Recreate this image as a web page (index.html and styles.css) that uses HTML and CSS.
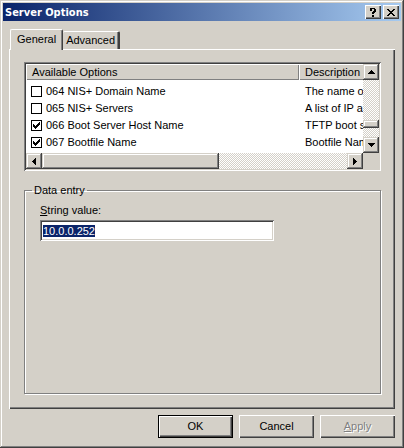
FILE: index.html
```html
<!DOCTYPE html>
<html lang="en">
<head>
<meta charset="utf-8">
<title>Server Options</title>
<link rel="stylesheet" href="styles.css">
</head>
<body>
<main class="window">
  <header class="titlebar">
    <h1>Server Options</h1>
    <button class="caption" aria-label="Help"><svg width="8" height="9" viewBox="0 0 8 9"><path d="M1 0h5v1h1v3H6v1H5v1H3V4h1V3h1V1H3v2H1V1H0h1zM3 7h2v2H3z"/></svg></button>
    <button class="caption close" aria-label="Close"><svg width="8" height="7" viewBox="0 0 8 7"><path d="M0 0h2v1h1v1h2V1h1V0h2v1H7v1H6v1H5v1h1v1h1v1h1v1H6V6H5V5H3v1H2v1H0V6h1V5h1V4h1V3H2V2H1V1H0z"/></svg></button>
  </header>
  <div class="tabs" role="tablist">
    <button class="tab active" role="tab" aria-selected="true">General</button>
    <button class="tab" role="tab" aria-selected="false">Advanced</button>
  </div>
  <section class="pane" role="tabpanel">
    <div class="list">
      <div class="view">
        <table>
          <thead><tr><th class="name">Available Options</th><th>Description</th></tr></thead>
          <tbody>
            <tr><td><label><input type="checkbox">064 NIS+ Domain Name</label></td><td>The name of the domain</td></tr>
            <tr><td><label><input type="checkbox">065 NIS+ Servers</label></td><td>A list of IP addresses</td></tr>
            <tr><td><label><input type="checkbox" checked>066 Boot Server Host Name</label></td><td>TFTP boot server</td></tr>
            <tr><td><label><input type="checkbox" checked>067 Bootfile Name</label></td><td>Bootfile Name</td></tr>
          </tbody>
        </table>
      </div>
      <div class="scroll vertical">
        <button class="arrow" aria-label="Scroll up"><svg width="7" height="4" viewBox="0 0 7 4"><path d="M3 0h1v1h1v1h1v1h1v1H0V3h1V2h1V1h1z"/></svg></button>
        <div class="track"><div class="thumb"></div></div>
        <button class="arrow" aria-label="Scroll down"><svg width="7" height="4" viewBox="0 0 7 4"><path d="M0 0h7v1H6v1H5v1H4v1H3V3H2V2H1V1H0z"/></svg></button>
      </div>
      <div class="scroll horizontal">
        <button class="arrow" aria-label="Scroll left"><svg width="4" height="7" viewBox="0 0 4 7"><path d="M3 0h1v7H3V6H2V5H1V4H0V3h1V2h1V1h1z"/></svg></button>
        <div class="track"><div class="thumb"></div></div>
        <button class="arrow" aria-label="Scroll right"><svg width="4" height="7" viewBox="0 0 4 7"><path d="M0 0h1v1h1v1h1v1h1v1H3v1H2v1H1v1H0z"/></svg></button>
      </div>
    </div>
    <fieldset>
      <legend>Data entry</legend>
      <label for="value"><u>S</u>tring value:</label>
      <input id="value" class="text" type="text" value="10.0.0.252">
    </fieldset>
  </section>
  <footer>
    <button class="push default">OK</button>
    <button class="push">Cancel</button>
    <button class="push" disabled><u>A</u>pply</button>
  </footer>
</main>
<script src="main.js"></script>
</body>
</html>
```
FILE: styles.css
```css
:root {
  --face: #d4d0c8;
  --shadow: #808080;
  --dark: #404040;
  --raised: inset 1px 1px #fff, inset -1px -1px var(--dark), inset -2px -2px var(--shadow);
}

* { box-sizing: border-box; }

body {
  margin: 0;
  background: var(--face);
  color: #000;
  font: 11px/13px "Liberation Sans", Arial, sans-serif;
}

button, input { font: inherit; color: inherit; }

button {
  border: 0;
  border-radius: 0;
  padding: 0;
  background: var(--face);
}

svg { display: block; shape-rendering: crispEdges; }

.window {
  display: flex;
  flex-direction: column;
  min-height: 100vh;
  padding: 3px 3px 10px;
  box-shadow: inset -1px -1px var(--dark), inset 1px 1px var(--face), inset -2px -2px var(--shadow), inset 2px 2px #fff;
}

.titlebar {
  display: flex;
  align-items: center;
  height: 18px;
  padding: 0 2px;
  background: linear-gradient(to right, #0a246a, #a6caf0);
  color: #fff;
}

.titlebar h1 {
  flex: 1;
  margin: 0;
  font: bold 11px/13px "DejaVu Sans Condensed", "DejaVu Sans", sans-serif;
}

.caption {
  display: grid;
  place-items: center;
  width: 16px;
  height: 14px;
  color: #000;
  box-shadow: var(--raised);
}

.close { margin-left: 2px; }

.tabs {
  display: flex;
  align-items: flex-end;
  height: 28px;
  padding-left: 7px;
}

.tab {
  height: 18px;
  padding: 0 3px 0 3px;
  border: solid;
  border-width: 1px 2px 0 0;
  border-color: #fff var(--dark);
  border-radius: 2px 2px 0 0;
  box-shadow: inset -1px 0 var(--shadow);
}

.tab.active {
  position: relative;
  height: 21px;
  margin-bottom: -1px;
  padding: 0 6px 2px 6px;
  border-width: 1px 1px 0 1px;
  border-color: #fff var(--dark) #fff #fff;
}

.pane {
  flex: 1;
  display: flex;
  flex-direction: column;
  gap: 13px;
  margin: 0 6px;
  padding: 13px 14px 15px 15px;
  box-shadow: var(--raised);
}

.list {
  display: grid;
  grid-template-columns: minmax(0, 1fr) 16px;
  grid-template-rows: auto 16px;
  padding: 2px;
  box-shadow: inset 1px 1px var(--shadow), inset -1px -1px #fff, inset 2px 2px var(--dark), inset -2px -2px var(--face);
}

.view { overflow: hidden; height: 89px; background: #fff; }

table {
  width: 120%;
  border-collapse: separate;
  border-spacing: 0;
  table-layout: fixed;
  white-space: nowrap;
}

th {
  height: 16px;
  padding: 1px 6px 0;
  background: var(--face);
  box-shadow: inset 1px 1px #fff, inset -1px -1px var(--shadow);
  font-weight: normal;
  text-align: left;
}

.name { width: 273px; }

tbody::before { content: ""; display: block; height: 3px; }

td { height: 17px; padding: 0 6px; }

td:first-child { padding-left: 5px; }

td label { display: flex; align-items: center; gap: 4px; }

input[type="checkbox"] {
  appearance: none;
  display: grid;
  place-items: center;
  width: 11px;
  height: 11px;
  margin: 0;
  border: 1px solid #000;
  background: #fff;
}

input[type="checkbox"]:checked::before {
  content: "";
  width: 7px;
  height: 7px;
  background: #000;
  clip-path: polygon(0 2px, 1px 2px, 1px 3px, 2px 3px, 2px 4px, 3px 4px, 3px 3px, 4px 3px, 4px 2px, 5px 2px, 5px 1px, 6px 1px, 6px 0, 7px 0, 7px 3px, 6px 3px, 6px 4px, 5px 4px, 5px 5px, 4px 5px, 4px 6px, 3px 6px, 3px 7px, 2px 7px, 2px 6px, 1px 6px, 1px 5px, 0 5px);
}

.scroll {
  display: flex;
  background: repeating-conic-gradient(#fff 0 25%, var(--face) 0 50%) 0 0 / 2px 2px;
}

.vertical { flex-direction: column; }

.arrow, .thumb {
  background: var(--face);
  box-shadow: inset -1px -1px var(--dark), inset 1px 1px var(--face), inset -2px -2px var(--shadow), inset 2px 2px #fff;
}

.arrow { display: grid; place-items: center; flex: none; width: 16px; height: 16px; }

.track { flex: 1; display: flex; }

.vertical .track { flex-direction: column; padding-bottom: 9px; justify-content: flex-end; }

.vertical .thumb { height: 8px; }

.horizontal .thumb { width: 58%; }

fieldset {
  flex: 1;
  min-width: 0;
  margin: 0;
  padding: 7px 15px;
  border: 1px solid var(--shadow);
  box-shadow: 1px 1px #fff, inset 1px 1px #fff;
}

legend { margin-left: -8px; padding: 0 2px; }

fieldset label { display: block; margin-bottom: 3px; }

.text {
  display: block;
  width: 234px;
  max-width: 100%;
  height: 21px;
  padding: 2px 3px;
  border: 0;
  outline: 0;
  background: #fff;
  box-shadow: inset 1px 1px var(--shadow), inset -1px -1px #fff, inset 2px 2px var(--dark), inset -2px -2px var(--face);
}

.text::selection { background: #0a246a; color: #fff; }

footer {
  display: flex;
  justify-content: flex-end;
  gap: 6px;
  padding: 6px 6px 0;
}

.push { width: 75px; height: 23px; box-shadow: var(--raised); }

.default { border: 1px solid #000; }

.push:disabled { color: var(--shadow); text-shadow: 1px 1px #fff; }
```
FILE: main.js
```js
const field = document.getElementById("value");
field.focus();
field.select();
```
